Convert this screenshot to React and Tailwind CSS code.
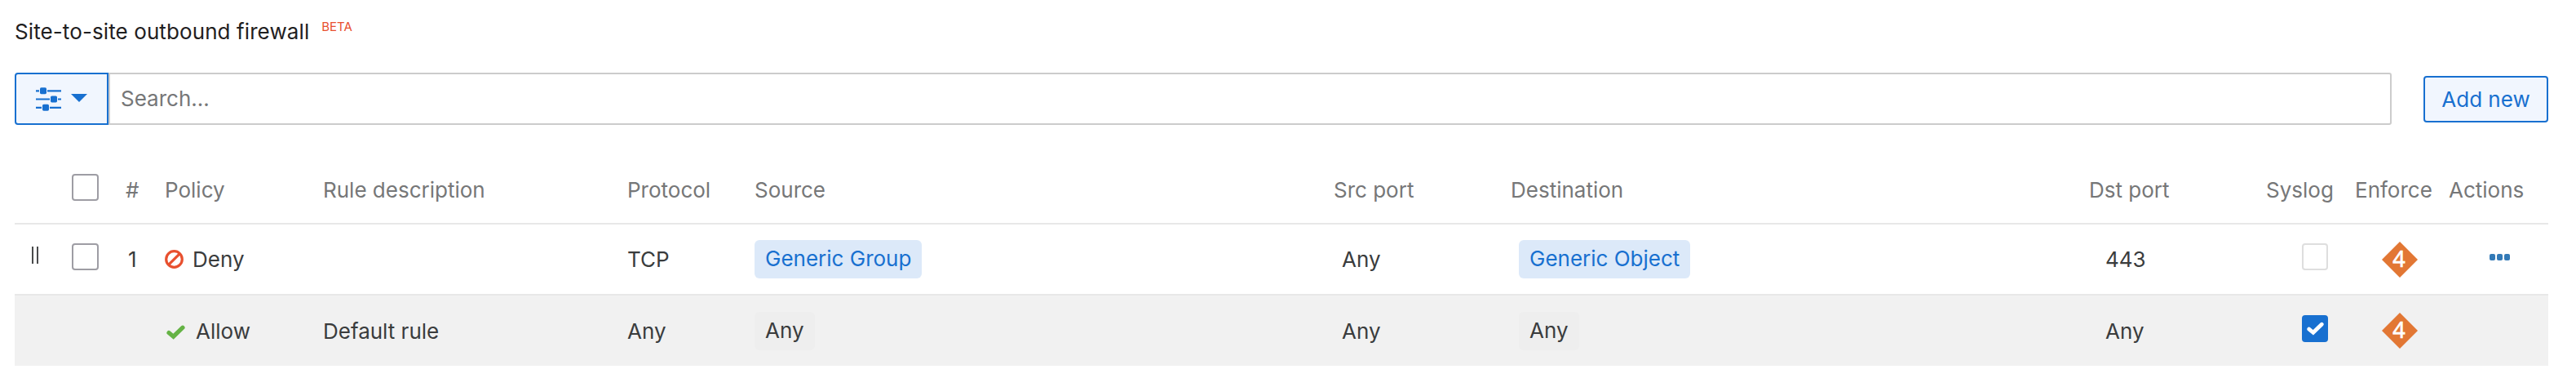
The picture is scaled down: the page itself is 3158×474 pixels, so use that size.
import React from "react";

const ROW =
  "grid grid-cols-[70px_64px_50px_194px_373px_156px_710px_217px_709px_217px_108px_116px_122px]";

function Checkbox({ className = "" }) {
  return <span className={`block h-[33px] rounded-[4px] border-2 bg-white ${className}`} />;
}

function Tick({ className, fill }) {
  return (
    <svg viewBox="0 0 23 18" className={className} fill="none" stroke={fill} strokeWidth="5.2">
      <path d="M3 9.6 L8.6 14.2 L20 3.2" strokeLinecap="round" strokeLinejoin="miter" />
    </svg>
  );
}

function Tag({ children, className }) {
  return (
    <span className={`block h-[47px] w-fit rounded-[6px] px-[13px] leading-[46px] ${className}`}>
      {children}
    </span>
  );
}

function Diamond() {
  return (
    <svg viewBox="0 0 44 44" className="block size-11">
      <path d="M22 0 L44 22 L22 44 L0 22 Z" fill="#e27734" />
      <text
        x="21"
        y="31"
        textAnchor="middle"
        fill="#fff"
        stroke="#fff"
        strokeWidth="0.6"
        className="font-['Noto_Sans',sans-serif] text-[27px]"
      >
        4
      </text>
    </svg>
  );
}

export default function App() {
  return (
    <div className="h-[474px] w-[3158px] bg-white pl-[18px] pr-[34px] font-['Inter',sans-serif] text-[26px] text-[#3a3c3d]">
      <header className="flex h-[89px] items-start pt-[22px]">
        <h1 className="leading-[33px] tracking-[0.1px] whitespace-nowrap text-[#1f2021]">Site-to-site outbound firewall</h1>
        <span className="ml-[15px] text-[15px] leading-[22px] text-[#e8502f]">BETA</span>
      </header>

      <div className="flex h-16 items-start">
        <button className="flex h-16 w-[115px] items-center rounded-l-[4px] border-2 border-[#1870d0] bg-[#f1f6fe] pl-6">
          <svg viewBox="0 0 31 29" className="h-[29px] w-[31px]" fill="#1870d0">
            <path d="M0 3.2h4v2.2H0zM14 3.2h17v2.2H14zM0 13.4h17v2.2H0zM27 13.4h4v2.2h-4zM0 23.7h7v2.2H0zM17 23.7h14v2.2H17z" />
            <rect x="5" y="0.2" width="8" height="8" rx="1.6" />
            <rect x="18" y="10.4" width="8" height="8" rx="1.6" />
            <rect x="8" y="20.7" width="8" height="8" rx="1.6" />
          </svg>
          <svg viewBox="0 0 20 10" className="ml-3 h-[10px] w-5 -translate-y-[1px]" fill="#1870d0">
            <path d="M0 0h20L10 10z" />
          </svg>
        </button>
        <input
          placeholder="Search..."
          className="h-16 w-[2799px] rounded-r-[3px] border-2 border-[#ccc] px-[13px] pb-[2px] outline-none placeholder:text-[#767778]"
        />
        <button className="mt-[4px] ml-[39px] h-[57px] w-[153px] rounded-[4px] border-2 border-[#1870d0] bg-[#f1f6fe] text-center leading-[53px] whitespace-nowrap text-[#1870d0]">
          Add new
        </button>
      </div>

      <div className="mt-[35px]">
        <div className={`${ROW} h-[87px] border-b-2 border-[#e8e8e8] pt-[28px] leading-[33px] whitespace-nowrap text-[#767778]`}>
          <span />
          <Checkbox className="-mt-[3px] w-[33px] border-[#9e9da4]" />
          <span className="pl-[2px]">#</span>
          <span>Policy</span>
          <span>Rule description</span>
          <span>Protocol</span>
          <span>Source</span>
          <span>Src port</span>
          <span>Destination</span>
          <span>Dst port</span>
          <span>Syslog</span>
          <span className="pl-[1px]">Enforce</span>
          <span>Actions</span>
        </div>

        <div className={`${ROW} h-[87px] border-b-2 border-[#e8e8e8] pt-[19px] leading-[33px] whitespace-nowrap`}>
          <span className="flex gap-[4px] pt-[8px] pl-[21px]">
            <i className="h-[21px] w-[2px] bg-[#4a4b4c]" />
            <i className="h-[21px] w-[2px] bg-[#4a4b4c]" />
          </span>
          <Checkbox className="mt-[4px] w-[33px] border-[#9e9da4]" />
          <span className="pt-[7px] pl-[5px]">1</span>
          <span className="flex pt-[7px]">
            <svg viewBox="0 0 23 23" className="mt-[5px] mr-[11px] size-[23px]" fill="none" stroke="#e8502f" strokeWidth="3.2">
              <circle cx="11.5" cy="11.5" r="9.8" />
              <path d="M4.8 18.2 L18.2 4.8" />
            </svg>
            Deny
          </span>
          <span />
          <span className="pt-[7px]">TCP</span>
          <Tag className="bg-[#dce9f9] text-[#1870d0]">Generic Group</Tag>
          <span className="pt-[7px] pl-[10px]">Any</span>
          <Tag className="ml-[10px] bg-[#dce9f9] text-[#1870d0]">Generic Object</Tag>
          <span className="pt-[7px] pl-[20px]">443</span>
          <Checkbox className="mt-[4px] ml-[44px] w-[32px] border-[#dedede]" />
          <span className="pt-[2px] pl-[34px]">
            <Diamond />
          </span>
          <span className="flex gap-[2px] pt-[17px] pl-[50px]">
            <i className="h-[8px] w-[7px] rounded-[2px] bg-[#337ab7]" />
            <i className="h-[8px] w-[7px] rounded-[2px] bg-[#337ab7]" />
            <i className="h-[8px] w-[7px] rounded-[2px] bg-[#337ab7]" />
          </span>
        </div>

        <div className={`${ROW} h-[86px] bg-[#f1f1f1] pt-[20px] leading-[33px] whitespace-nowrap`}>
          <span />
          <span />
          <span />
          <span className="flex pt-[7px]">
            <Tick className="mt-[9px] mr-[13px] ml-[2px] h-[18px] w-[23px]" fill="#65b345" />
            Allow
          </span>
          <span className="pt-[7px]">Default rule</span>
          <span className="pt-[7px]">Any</span>
          <Tag className="bg-[#eee]">Any</Tag>
          <span className="pt-[7px] pl-[10px]">Any</span>
          <Tag className="ml-[10px] bg-[#eee]">Any</Tag>
          <span className="pt-[7px] pl-[20px]">Any</span>
          <span className="mt-[4px] ml-[44px] flex h-[33px] w-[32px] items-center justify-center rounded-[4px] bg-[#1870d0]">
            <Tick className="h-[17px] w-[21px]" fill="#fff" />
          </span>
          <span className="pt-[1px] pl-[34px]">
            <Diamond />
          </span>
          <span />
        </div>
      </div>
    </div>
  );
}
